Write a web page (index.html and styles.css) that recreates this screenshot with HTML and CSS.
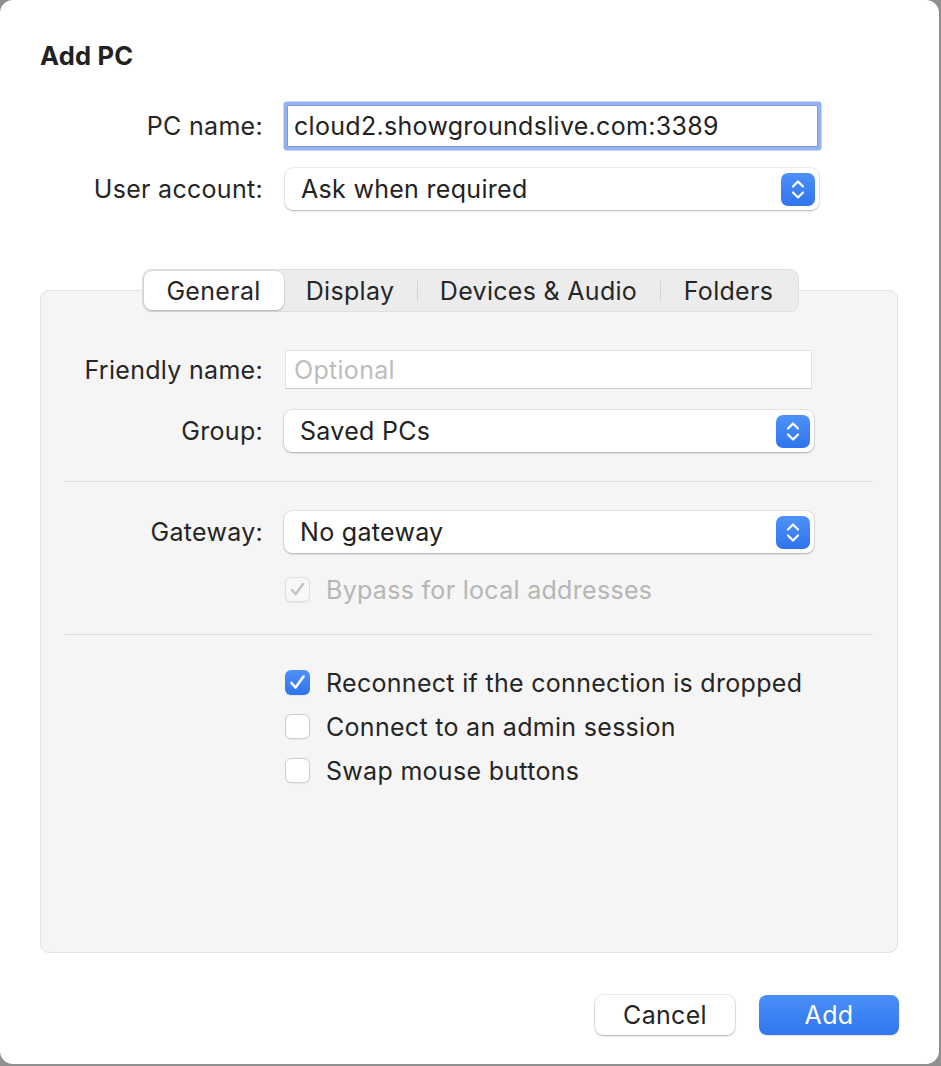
FILE: index.html
```html
<!DOCTYPE html>
<html>
<head>
<meta charset="utf-8">
<link rel="stylesheet" href="styles.css">
</head>
<body>
<div class="window">
  <h1 class="title">Add PC</h1>

  <div class="row row-pc">
    <label class="lbl">PC name:</label>
    <div class="field focus">cloud2.showgroundslive.com:3389</div>
  </div>
  <div class="row row-user">
    <label class="lbl">User account:</label>
    <div class="popup popup-top">
      <span>Ask when required</span>
      <span class="stepper"><svg width="34" height="33" viewBox="0 0 34 33"><path d="M12 13.5 L17 8.5 L22 13.5 M12 19.5 L17 24.5 L22 19.5" fill="none" stroke="#fff" stroke-width="2.2" stroke-linecap="round" stroke-linejoin="round"/></svg></span>
    </div>
  </div>

  <div class="tabs">
    <div class="seg">
      <div class="seg-item sel w-general">General</div>
      <div class="seg-item w-display">Display</div>
      <div class="seg-sep"></div>
      <div class="seg-item w-devices">Devices &amp; Audio</div>
      <div class="seg-sep"></div>
      <div class="seg-item w-folders">Folders</div>
    </div>
    <div class="panel">
      <div class="row row-friendly">
        <label class="lbl plbl">Friendly name:</label>
        <div class="field plain placeholder">Optional</div>
      </div>
      <div class="row row-group">
        <label class="lbl plbl">Group:</label>
        <div class="popup popup-panel">
          <span>Saved PCs</span>
          <span class="stepper"><svg width="34" height="33" viewBox="0 0 34 33"><path d="M12 13.5 L17 8.5 L22 13.5 M12 19.5 L17 24.5 L22 19.5" fill="none" stroke="#fff" stroke-width="2.2" stroke-linecap="round" stroke-linejoin="round"/></svg></span>
        </div>
      </div>
      <div class="sep sep1"></div>
      <div class="row row-gateway">
        <label class="lbl plbl">Gateway:</label>
        <div class="popup popup-panel">
          <span>No gateway</span>
          <span class="stepper"><svg width="34" height="33" viewBox="0 0 34 33"><path d="M12 13.5 L17 8.5 L22 13.5 M12 19.5 L17 24.5 L22 19.5" fill="none" stroke="#fff" stroke-width="2.2" stroke-linecap="round" stroke-linejoin="round"/></svg></span>
        </div>
      </div>
      <div class="check-row disabled row-bypass">
        <span class="box box-disabled"><svg width="25" height="25" viewBox="0 0 25 25"><path d="M6.5 13 L10.5 17.5 L18.5 6.5" fill="none" stroke="#c3c3c3" stroke-width="2.6" stroke-linecap="round" stroke-linejoin="round"/></svg></span>
        <span class="check-text">Bypass for local addresses</span>
      </div>
      <div class="sep sep2"></div>
      <div class="check-row row-c1">
        <span class="box box-on"><svg width="25" height="25" viewBox="0 0 25 25"><path d="M6.5 13 L10.5 17.5 L18.5 6.5" fill="none" stroke="#fff" stroke-width="2.6" stroke-linecap="round" stroke-linejoin="round"/></svg></span>
        <span class="check-text">Reconnect if the connection is dropped</span>
      </div>
      <div class="check-row row-c2">
        <span class="box"></span>
        <span class="check-text">Connect to an admin session</span>
      </div>
      <div class="check-row row-c3">
        <span class="box"></span>
        <span class="check-text">Swap mouse buttons</span>
      </div>
    </div>
  </div>

  <div class="buttons">
    <button class="btn btn-cancel">Cancel</button>
    <button class="btn btn-add">Add</button>
  </div>
</div>
</body>
</html>
```

FILE: styles.css
```css
* { box-sizing: border-box; }
html, body { margin: 0; padding: 0; }
body {
  background: #8f8f8f;
  width: 941px;
  height: 1066px;
  overflow: hidden;
  font-family: "Inter", "Liberation Sans", sans-serif;
  color: #252525;
  letter-spacing: 0.3px;
}
.window {
  width: 939px;
  height: 1064px;
  background: #ffffff;
  border-radius: 13px;
  padding: 0 41px 0 40px;
  display: flex;
  flex-direction: column;
}
.title {
  margin: 40px 0 0 0;
  font-size: 25.5px;
  font-weight: 700;
  line-height: 32px;
  letter-spacing: 0.2px;
  color: #222;
}
.row {
  display: flex;
  align-items: center;
}
.lbl {
  width: 223px;
  text-align: right;
  font-size: 25px;
  line-height: 30px;
  color: #262626;
  flex: none;
}
.plbl { width: 222px; }
.row-pc { margin-top: 33px; }
.row-user { margin-top: 21px; }

.field {
  height: 42px;
  background: #fff;
  font-size: 25px;
  line-height: 42px;
  padding-left: 6px;
  color: #222;
}
.focus {
  margin-left: 24px;
  width: 531px;
  border: 1px solid #7d9ad6;
  box-shadow: 0 0 0 3.5px #93b2f3;
  border-radius: 1px;
  line-height: 40px;
}
.plain {
  margin-left: 22px;
  width: 527px;
  height: 39px;
  line-height: 38px;
  border: 1px solid #e2e2e2;
  border-bottom-color: #c9c9c9;
  padding-left: 8px;
}
.placeholder { color: #bdbdbd; }

.popup {
  height: 42px;
  background: #fff;
  border-radius: 8px;
  box-shadow: 0 0 0 0.5px rgba(0,0,0,0.12), 0 1px 2px rgba(0,0,0,0.25);
  display: flex;
  align-items: center;
  justify-content: space-between;
  padding: 0 4px 0 16px;
  font-size: 25px;
  color: #222;
}
.popup-top { margin-left: 22px; width: 534px; }
.popup-panel { margin-left: 21px; width: 530px; }
.stepper {
  width: 34px;
  height: 33px;
  border-radius: 7px;
  background: linear-gradient(#4d92f8, #2f73ee);
  display: flex;
}

.tabs {
  margin-top: 59px;
  display: flex;
  flex-direction: column;
  align-items: center;
}
.seg {
  position: relative;
  z-index: 1;
  display: flex;
  align-items: center;
  height: 43px;
  padding: 0 1px;
  background: #ececec;
  border: 1px solid #e0e0e0;
  border-radius: 9px;
  margin-left: 2px;
}
.seg-item {
  height: 39px;
  display: flex;
  align-items: center;
  justify-content: center;
  font-size: 25px;
  color: #262626;
}
.seg-item.sel {
  background: #fff;
  border-radius: 8px;
  box-shadow: 0 0 0 0.5px rgba(0,0,0,0.1), 0 1px 2px rgba(0,0,0,0.22);
}
.w-general { width: 140px; }
.w-display { width: 133px; }
.w-devices { width: 242px; }
.w-folders { width: 136px; }
.seg-sep {
  width: 1px;
  height: 20px;
  background: #d3d3d3;
}

.panel {
  width: 858px;
  height: 663px;
  margin-top: -22px;
  background: #f5f5f5;
  border: 1px solid #e3e3e3;
  border-radius: 9px;
  padding-top: 59px;
  display: flex;
  flex-direction: column;
}
.row-group { margin-top: 21px; }
.sep {
  height: 1px;
  background: #dcdcdc;
  margin: 0 24px;
}
.sep1 { margin-top: 29px; }
.row-gateway { margin-top: 29px; }
.sep2 { margin-top: 32px; }

.check-row {
  display: flex;
  align-items: center;
  margin-left: 244px;
  height: 25px;
}
.row-bypass { margin-top: 24px; }
.row-c1 { margin-top: 35px; }
.row-c2, .row-c3 { margin-top: 19px; }
.box {
  width: 25px;
  height: 25px;
  border-radius: 6px;
  background: #fff;
  border: 1px solid #cfcfcf;
  box-shadow: 0 0.5px 1px rgba(0,0,0,0.06);
  display: flex;
  align-items: center;
  justify-content: center;
  flex: none;
}
.box svg { display: block; }
.box-on {
  border: none;
  background: linear-gradient(#4d92f8, #2f73ee);
}
.box-disabled {
  background: #f7f7f7;
  border-color: #e0e0e0;
}
.check-text {
  margin-left: 16px;
  font-size: 25px;
  color: #252525;
}
.disabled .check-text { color: #b6b6b6; }

.buttons {
  margin-top: 42px;
  display: flex;
  justify-content: flex-end;
  gap: 24px;
  padding-right: 0;
  margin-right: -1px;
}
.btn {
  width: 140px;
  height: 40px;
  border-radius: 8px;
  font-family: "Inter", "Liberation Sans", sans-serif;
  font-size: 25px;
  letter-spacing: 0.3px;
  border: none;
  padding: 0;
}
.btn-cancel {
  background: #fff;
  color: #252525;
  box-shadow: 0 0 0 0.5px rgba(0,0,0,0.15), 0 1px 2px rgba(0,0,0,0.25);
}
.btn-add {
  background: linear-gradient(#4a8ff8, #3077f0);
  color: #fff;
  box-shadow: 0 1px 1.5px rgba(0,0,0,0.12);
}
```
